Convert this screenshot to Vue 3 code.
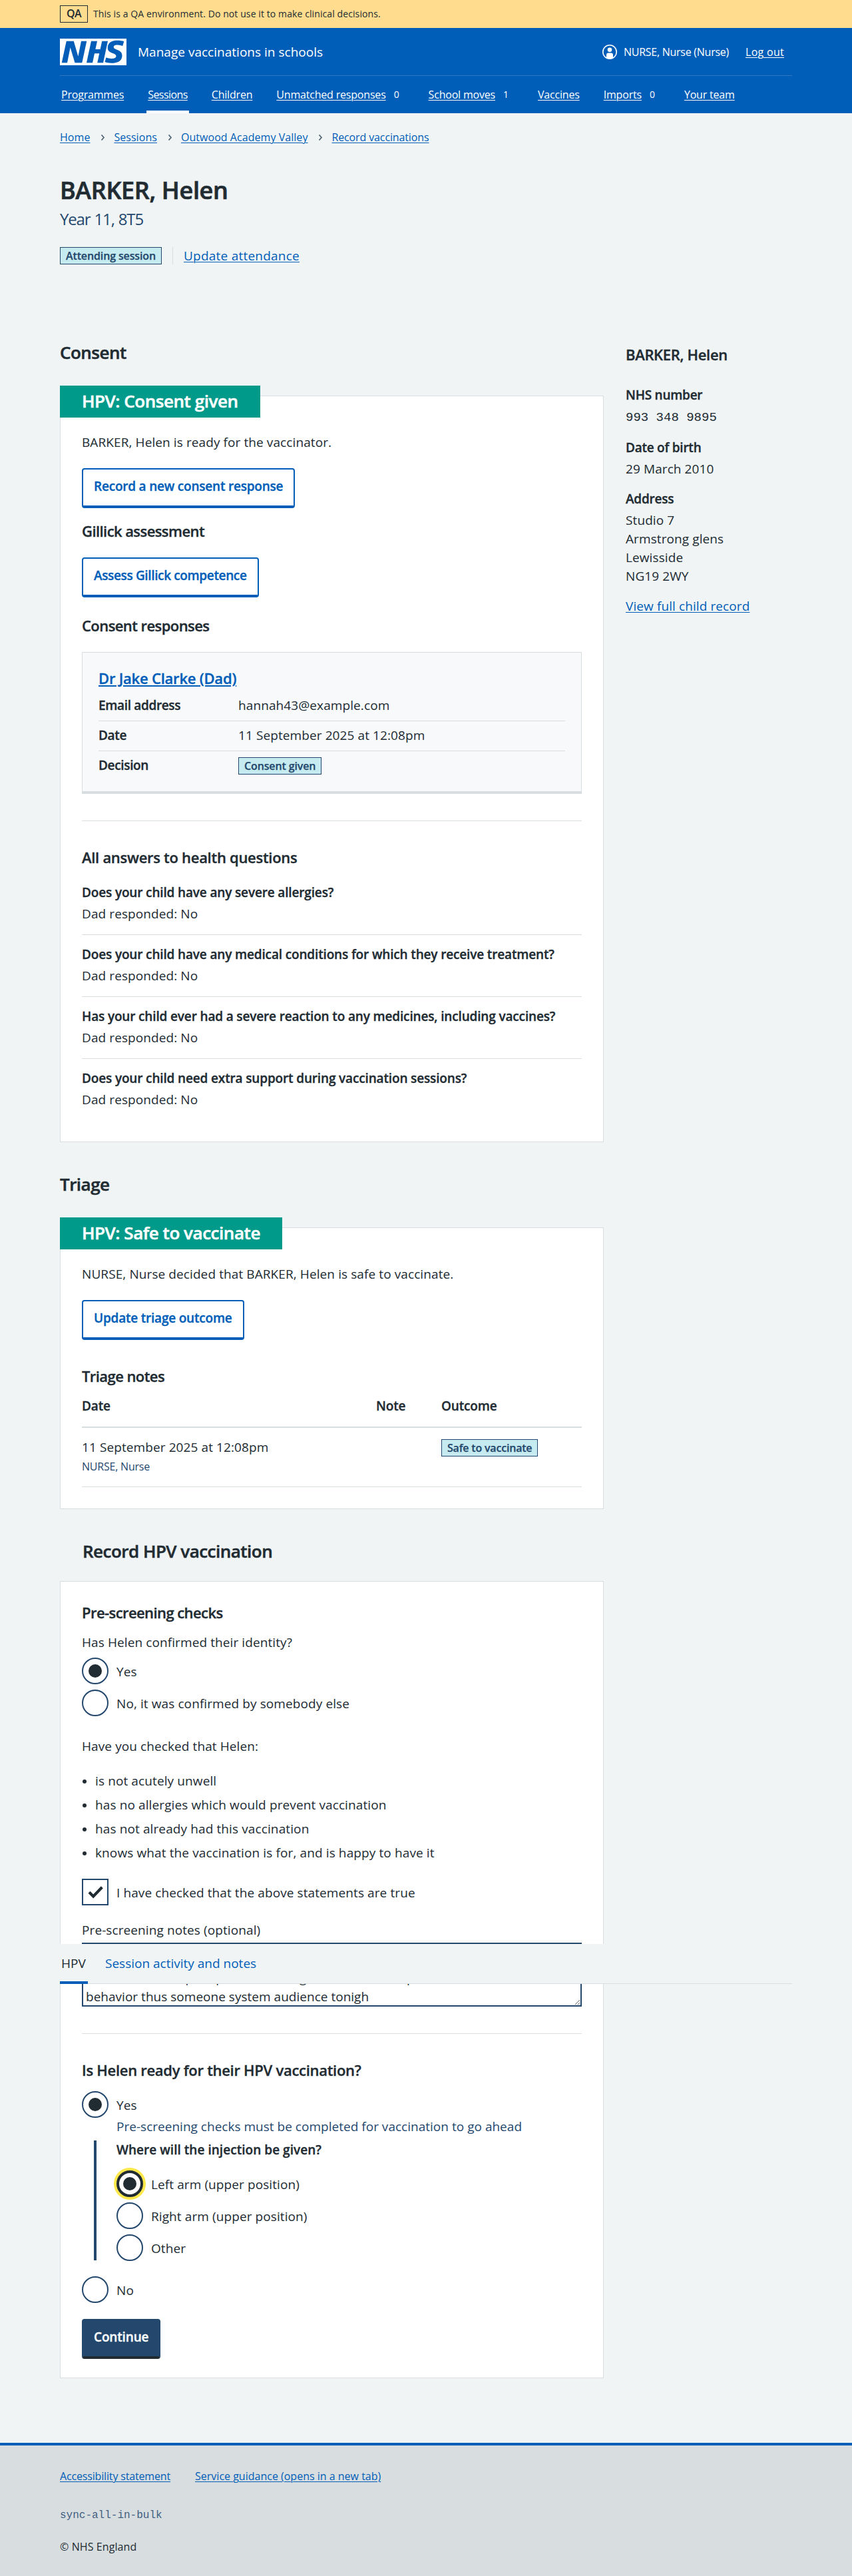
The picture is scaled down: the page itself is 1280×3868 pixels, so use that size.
<script setup>
import { ref } from 'vue'

const nav = [
  { label: 'Programmes' },
  { label: 'Sessions', active: true },
  { label: 'Children' },
  { label: 'Unmatched responses', count: 0 },
  { label: 'School moves', count: 1 },
  { label: 'Vaccines' },
  { label: 'Imports', count: 0 },
  { label: 'Your team' },
]
const crumbs = ['Home', 'Sessions', 'Outwood Academy Valley', 'Record vaccinations']
const questions = [
  'Does your child have any severe allergies?',
  'Does your child have any medical conditions for which they receive treatment?',
  'Has your child ever had a severe reaction to any medicines, including vaccines?',
  'Does your child need extra support during vaccination sessions?',
]
const checks = [
  'is not acutely unwell',
  'has no allergies which would prevent vaccination',
  'has not already had this vaccination',
  'knows what the vaccination is for, and is happy to have it',
]
const sites = ['Left arm (upper position)', 'Right arm (upper position)', 'Other']
const notes = ref(`Note hour still work record inside market center although others
material once hope report after bring leader station top treatment animal
behavior thus someone system audience tonigh`)
</script>

<template>
  <div class="page">
    <div class="env"><div class="wrap env-in"><strong class="env-tag">QA</strong><span>This is a QA environment. Do not use it to make clinical decisions.</span></div></div>
    <header class="header">
      <div class="wrap">
        <div class="top">
          <svg class="logo" viewBox="0 0 200 80" width="100" height="40" aria-label="NHS">
            <path fill="#fff" fill-rule="evenodd" d="M200 0v80H0V0h200Zm-27.500 5.500c-14.500 0-29 5-29 22 0 10.200 7.700 13.500 14.700 16.300l.7.3c5.400 2 10.100 3.900 10.100 8.400 0 6.500-8.500 7.500-14 7.500s-12.500-1.500-16-3.500L135 70c5.500 2 13.500 3.500 20 3.500 15.500 0 32-4.500 32-22.500 0-19.500-25.500-16.500-25.500-25.500 0-5.500 5.500-6.500 12.500-6.500a35 35 0 0 1 14.500 3l4-13.500c-4.500-2-12-3-20-3Zm-131 2h-22l-14 65H22l9-45h.5l13.500 45h21.500l14-65H64l-9 45h-.5l-13-45ZM94 7.500l-14 65h18l6-28h14.500l-6 28H130l14-65h-17.500l-5.300 24.500h-14.500l5.300-24.500Z" />
          </svg>
          <span class="service">Manage vaccinations in schools</span>
          <span class="user">
            <svg width="22" height="22" viewBox="0 0 22 22">
              <circle cx="11" cy="11" r="10.200" fill="none" stroke="#fff" stroke-width="1.600" />
              <circle cx="11" cy="7.700" r="3.300" fill="#fff" />
              <path fill="#fff" d="M6 20v-4.500a3 3 0 0 1 3-3h4a3 3 0 0 1 3 3V20a10 10 0 0 1-10 0Z" />
            </svg>
            <span class="uname">NURSE, Nurse (Nurse)</span>
          </span>
          <a class="logout">Log out</a>
        </div>
        <nav class="nav">
          <span v-for="n in nav" :key="n.label" class="nav-item" :class="{ active: n.active }"><a>{{ n.label }}</a><span v-if="n.count !== undefined" class="count">{{ n.count }}</span></span>
        </nav>
      </div>
    </header>

    <main class="wrap main">
      <div class="crumbs">
        <template v-for="(c, i) in crumbs" :key="c">
          <svg v-if="i" class="chev" width="36" height="24" viewBox="0 0 36 24"><path d="M17.500 8.500l3.500 4-3.500 4" fill="none" stroke="#4c6272" stroke-width="1.700" /></svg>
          <a>{{ c }}</a>
        </template>
      </div>
      <h1>BARKER, Helen</h1>
      <p class="caption">Year 11, 8T5</p>
      <div class="attend"><span class="tag">Attending session</span><i></i><a>Update attendance</a></div>

      <div class="cols">
        <div class="left">
          <h2>Consent</h2>
          <section class="card">
            <h3 class="label">HPV: Consent given</h3>
            <p class="lead">BARKER, Helen is ready for the vaccinator.</p>
            <button class="btn">Record a new consent response</button>
            <h4 class="mt20">Gillick assessment</h4>
            <button class="btn mt26 tight">Assess Gillick competence</button>
            <h4 class="mt28">Consent responses</h4>
            <div class="response">
              <h4><a>Dr Jake Clarke (Dad)</a></h4>
              <dl>
                <div><dt>Email address</dt><dd>hannah43@example.com</dd></div>
                <div><dt>Date</dt><dd>11 September 2025 at 12:08pm</dd></div>
                <div><dt>Decision</dt><dd><span class="tag">Consent given</span></dd></div>
              </dl>
            </div>
            <hr />
            <h4 class="mt40 loose">All answers to health questions</h4>
            <ul class="questions"><li v-for="q in questions" :key="q"><b>{{ q }}</b><p>Dad responded: No</p></li></ul>
          </section>

          <h2 class="next">Triage</h2>
          <section class="card short">
            <h3 class="label">HPV: Safe to vaccinate</h3>
            <p class="lead">NURSE, Nurse decided that BARKER, Helen is safe to vaccinate.</p>
            <button class="btn">Update triage outcome</button>
            <h4 class="mt40">Triage notes</h4>
            <div class="trow thead"><b>Date</b><b>Note</b><b>Outcome</b></div>
            <div class="trow tbody"><div>11 September 2025 at 12:08pm<small>NURSE, Nurse</small></div><div></div><div><span class="tag">Safe to vaccinate</span></div></div>
          </section>

          <h2 class="next inset">Record HPV vaccination</h2>
          <section class="card form">
            <h4>Pre-screening checks</h4>
            <p class="mt17">Has Helen confirmed their identity?</p>
            <div class="opt mt9"><span class="radio on"></span>Yes</div>
            <div class="opt mt8"><span class="radio"></span>No, it was confirmed by somebody else</div>
            <p class="mt31">Have you checked that Helen:</p>
            <ul class="bullets"><li v-for="c in checks" :key="c">{{ c }}</li></ul>
            <div class="opt mt25">
              <span class="check"><svg width="36" height="36" viewBox="0 0 36 36"><path d="M9 18.200l6.200 6.300L28.300 10.800" fill="none" stroke="#212b32" stroke-width="4.200" /></svg></span>I have checked that the above statements are true
            </div>
            <p class="mt23">Pre-screening notes (optional)</p>
            <div class="notes">
              <textarea v-model="notes" spellcheck="false"></textarea>
              <div class="tabs"><a class="current">HPV</a><a>Session activity and notes</a></div>
            </div>
            <hr />
            <h4 class="mt40 loose">Is Helen ready for their HPV vaccination?</h4>
            <div class="opt mt18"><span class="radio on"></span>Yes</div>
            <p class="hint">Pre-screening checks must be completed for vaccination to go ahead</p>
            <div class="cond">
              <b>Where will the injection be given?</b>
              <div v-for="(s, i) in sites" :key="s" class="opt"><span class="radio" :class="{ on: !i, focus: !i }"></span>{{ s }}</div>
            </div>
            <div class="opt mt24"><span class="radio"></span>No</div>
            <button class="btn solid mt24">Continue</button>
          </section>
        </div>

        <aside>
          <h4>BARKER, Helen</h4>
          <b>NHS number</b><p class="mono">993 348 9895</p>
          <b>Date of birth</b><p>29 March 2010</p>
          <b>Address</b><p>Studio 7<br />Armstrong glens<br />Lewisside<br />NG19 2WY</p>
          <a>View full child record</a>
        </aside>
      </div>
    </main>

    <footer>
      <div class="wrap">
        <div class="flinks"><a>Accessibility statement</a><a>Service guidance (opens in a new tab)</a></div>
        <p class="build">sync-all-in-bulk</p>
        <p class="copy">© NHS England</p>
      </div>
    </footer>
  </div>
</template>

<style>
body { margin: 0; background: #f0f4f5; }
</style>
<style scoped>
* { box-sizing: border-box; }
.page { font: 400 19px/28px "Open Sans", sans-serif; letter-spacing: 0.005em; color: #212b32; height: 3868px; display: flex; flex-direction: column; overflow: hidden; }
h1, h2, h3, h4, p, ul, dl, dd { margin: 0; padding: 0; }
ul { list-style: none; }
b, h1, h2, h3, h4, dt, .tag, .btn { font-weight: 600; letter-spacing: -0.008em; -webkit-text-stroke: 0.35px currentColor; }
a { color: #005eb8; text-decoration: underline; text-decoration-thickness: 1px; text-underline-offset: 2px; }
.wrap { width: 1100px; margin: 0 auto; }
.env { height: 42px; background: #ffdc8e; flex: none; }
.env-in { height: 42px; display: flex; align-items: center; gap: 8px; font-size: 14px; line-height: 20px; }
.env-tag { width: 42px; height: 26px; border: 1px solid #212b32; text-align: center; font-size: 16px; line-height: 23px; font-weight: 600; letter-spacing: -0.03em; }
.header { height: 128px; background: #005eb8; color: #fff; flex: none; }
.header a { color: #fff; }
.top { height: 72px; padding: 16px 12px 15px 0; border-bottom: 1px solid #3378be; display: flex; align-items: center; font-size: 16px; line-height: 24px; }
.logo { display: block; }
.service { font-size: 19px; margin-left: 17px; padding-bottom: 1px; letter-spacing: 0.001em; }
.user { margin-left: auto; display: flex; align-items: center; gap: 10px; }
.uname { letter-spacing: -0.016em; }
.logout { margin-left: 25px; letter-spacing: 0.018em; }
.nav { height: 56px; padding-left: 2px; display: flex; gap: 36px; font-size: 16px; letter-spacing: -0.012em; line-height: 56px; }
.nav-item { display: flex; }
.nav-item.active { margin: 0 -2px; padding: 0 2px; border-bottom: 4px solid #fff; letter-spacing: -0.036em; }
.count { width: 24px; margin-left: 4px; text-align: center; font-size: 14px; }
.main { padding-top: 24px; flex: 1; }
.crumbs { display: flex; font-size: 16px; line-height: 24px; letter-spacing: 0.003em; }
.crumbs a:last-child { letter-spacing: -0.008em; }
.chev { display: block; }
h1 { font-size: 36px; line-height: 44px; margin-top: 46px; letter-spacing: -0.01em; -webkit-text-stroke-width: 0.7px; }
.caption { font-size: 24px; line-height: 32px; letter-spacing: -0.048em; word-spacing: 1px; color: #24486d; margin-top: 5px; }
.attend { margin-top: 26px; height: 26px; display: flex; align-items: center; gap: 16px; line-height: 26px; }
.attend i { width: 1px; height: 26px; background: #d8dde0; }
.attend a { letter-spacing: 0.012em; padding-bottom: 1px; }
.tag { display: inline-block; height: 26px; border: 1px solid #24486d; background: #c5eaef; color: #24486d; font-size: 16px; line-height: 24px; padding: 0 8px; white-space: nowrap; -webkit-text-stroke-width: 0.25px; }
.cols { display: grid; grid-template-columns: 817px 1fr; column-gap: 33px; margin-top: 116px; }
h2 { font-size: 26px; line-height: 32px; letter-spacing: -0.02em; -webkit-text-stroke-width: 0.5px; }
h2.next { margin-top: 47px; }
h2.inset { padding-left: 34px; }
.card { margin-top: 49px; background: #fff; border: 1px solid #d8dde0; padding: 0 32px 49px; }
.card.short { padding-bottom: 32px; }
.card.form { margin-top: 29px; padding: 32px 32px 28px; }
.label { margin: -16px 0 0 -33px; width: fit-content; height: 48px; padding: 0 33px; background: #009a8a; color: #fff; font-size: 26px; line-height: 46px; letter-spacing: -0.0175em; -webkit-text-stroke-width: 0.5px; }
.lead { margin: 23px 0 25px; }
.btn { display: block; height: 60px; border: 2px solid #005eb8; border-bottom-width: 4px; border-radius: 4px; background: #fff; color: #005eb8; font-family: inherit; font-size: 19px; line-height: 50px; padding: 0 16px 4px; }
.btn:not(.solid):not(.tight) { letter-spacing: -0.011em; }
.btn.tight { letter-spacing: -0.019em; }
.btn.solid { background: #24486d; border-color: #24486d; border-bottom-color: #212b32; color: #fff; }
h4 { font-size: 22px; line-height: 28px; letter-spacing: -0.026em; }
h4.loose { letter-spacing: -0.013em; }
.mt8 { margin-top: 8px; }
.mt9 { margin-top: 9px; }
.mt17 { margin-top: 17px; }
.mt18 { margin-top: 18px; }
.mt20 { margin-top: 20px; }
.mt23 { margin-top: 23px; }
.mt24 { margin-top: 24px; }
.mt25 { margin-top: 25px; }
.mt26 { margin-top: 26px; }
.mt28 { margin-top: 28px; }
.mt31 { margin-top: 31px; }
.mt40 { margin-top: 40px; }
.response { margin-top: 26px; border: 1px solid #d8dde0; border-bottom-width: 4px; background: #f8f9fb; padding: 24px 24px 18px; }
.response h4 { letter-spacing: -0.01em; }
.response h4 a { text-decoration-thickness: 2px; }
dl { margin-top: 6px; }
dl div { display: flex; padding: 7px 0 9px; border-bottom: 1px solid #d8dde0; }
dl div:last-child { border: 0; padding-bottom: 7px; }
dt { width: 210px; letter-spacing: -0.018em; }
dd { height: 28px; }
dd .tag { margin-top: 2px; vertical-align: top; }
hr { height: 1px; border: 0; background: #d8dde0; margin: 40px 0 0; }
.questions { margin-top: 10px; }
.questions li { padding: 15px 0 17px; border-bottom: 1px solid #d8dde0; }
.questions li:last-child { border: 0; padding-bottom: 0; }
.questions b { display: block; white-space: nowrap; }
.questions p { margin-top: 4px; }
.trow { display: grid; grid-template-columns: 442px 98px 1fr; }
.thead { padding: 17px 0; border-bottom: 2px solid #d8dde0; }
.tbody { padding: 15px 0 18px; border-bottom: 1px solid #d8dde0; }
.tbody small { display: block; font-size: 16px; line-height: 24px; margin-top: 3px; color: #24486d; letter-spacing: -0.013em; }
.tbody .tag { margin-top: 2px; vertical-align: top; letter-spacing: -0.012em; }
.opt { display: flex; height: 40px; gap: 12px; line-height: 42px; white-space: nowrap; }
.radio { width: 40px; height: 40px; border: 2px solid #24486d; border-radius: 50%; background: #fff; display: grid; place-items: center; }
.radio.on::after { content: ""; width: 20px; height: 20px; border-radius: 50%; background: #212b32; }
.radio.focus { border: 4px solid #212b32; box-shadow: 0 0 0 4px #ffe94a; }
.check { width: 40px; height: 40px; border: 2px solid #24486d; }
.check svg { display: block; }
.bullets { margin-top: 24px; }
.bullets li { position: relative; padding-left: 20px; margin-bottom: 8px; letter-spacing: 0.006em; }
.bullets li:last-child { margin-bottom: 0; }
.bullets li::before { content: ""; position: absolute; left: 1px; top: 12px; width: 6px; height: 6px; border-radius: 50%; background: #212b32; }
.notes { position: relative; margin-top: 5px; }
textarea { display: block; width: 751px; height: 96px; margin: 0; border: 2px solid #24486d; border-radius: 0; padding: 9px 4px 0; font: inherit; letter-spacing: 0.001em; color: inherit; background: #fff; overflow: hidden; resize: vertical; }
.tabs { position: absolute; z-index: 2; left: -33px; top: 2px; width: 1100px; height: 60px; background: #f0f4f5; border-bottom: 1px solid #d8dde0; display: flex; gap: 24px; line-height: 58px; }
.tabs a { text-decoration: none; padding: 0 2px; height: 60px; letter-spacing: 0; }
.tabs .current { color: #212b32; border-bottom: 4px solid #005eb8; width: 42px; }
.hint { color: #24486d; margin: -1px 0 8px 52px; white-space: nowrap; letter-spacing: 0.001em; }
.cond { margin-left: 18px; border-left: 4px solid #24486d; padding-left: 30px; height: 180px; }
.cond b { display: block; margin: -1px 0 17px; letter-spacing: 0.002em; }
.cond .opt { margin-bottom: 8px; }
aside h4 { margin-top: 5px; letter-spacing: -0.015em; }
aside b { display: block; margin-top: 17px; letter-spacing: -0.013em; }
aside h4 + b { margin-top: 33px; }
aside p { margin-top: 4px; }
aside .mono { font-family: "Liberation Mono", monospace; letter-spacing: 0; padding-top: 2px; }
aside a { display: inline-block; margin-top: 17px; }
footer { flex: none; height: 200px; border-top: 4px solid #005eb8; background: #d8dde0; font-size: 16px; line-height: 24px; }
.flinks { display: flex; gap: 37px; padding-top: 34px; letter-spacing: 0; }
.flinks a:first-child { letter-spacing: -0.01em; }
.build { font-family: "Liberation Mono", monospace; letter-spacing: 0; color: #425f80; margin-top: 35px; }
.copy { margin-top: 23px; }
</style>
